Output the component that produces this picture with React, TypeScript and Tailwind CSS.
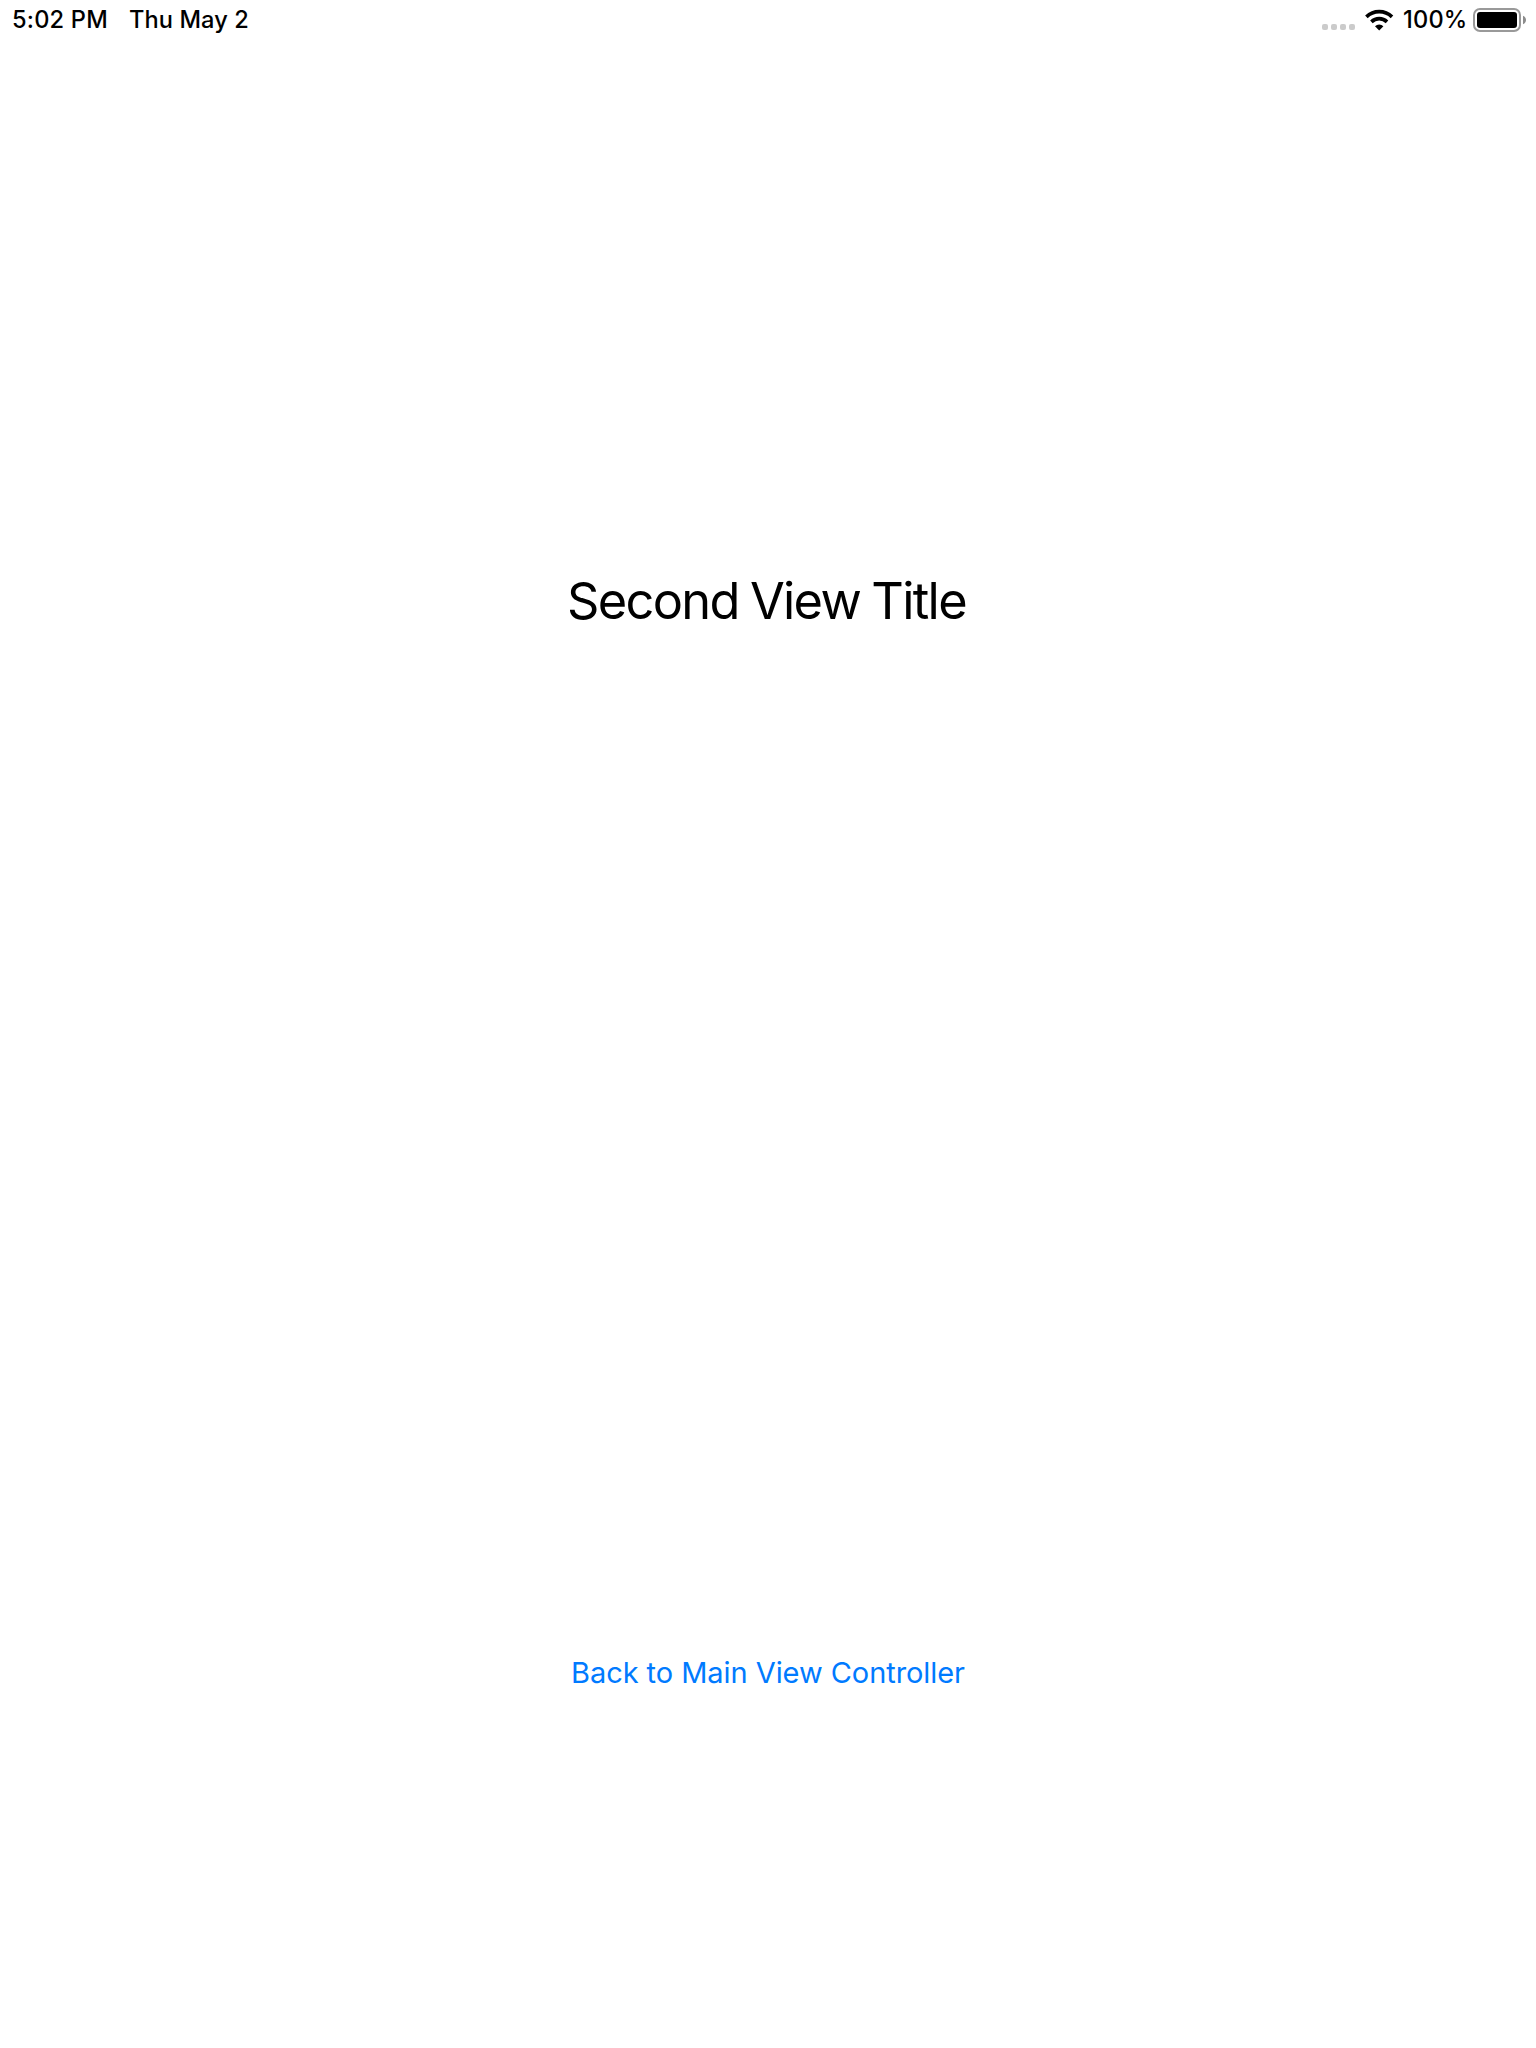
function CellularDots() {
  return (
    <svg width="34" height="40" viewBox="0 0 34 40" fill="#cbcbcb">
      <rect x="0" y="24" width="6" height="6" rx="2" />
      <rect x="9" y="24" width="6" height="6" rx="2" />
      <rect x="18" y="24" width="6" height="6" rx="2" />
      <rect x="27" y="24" width="6" height="6" rx="2" />
    </svg>
  );
}

function Wifi() {
  return (
    <svg width="30" height="40" viewBox="0 0 30 40" fill="none" stroke="#000">
      <path d="M1.4 16.8 A18.6 18.6 0 0 1 27 16.8" strokeWidth="3.7" />
      <path d="M6.4 21.8 A11.4 11.4 0 0 1 22 21.8" strokeWidth="3.7" />
      <path d="M14.2 30.4 L10 26.2 A6 6 0 0 1 18.4 26.2 Z" fill="#000" stroke="none" />
    </svg>
  );
}

function Battery() {
  return (
    <svg width="54" height="40" viewBox="0 0 54 40">
      <rect x="1" y="9" width="46" height="22" rx="6" fill="none" stroke="#999" strokeWidth="2" />
      <rect x="4" y="12" width="40" height="16" rx="3" fill="#000" />
      <path d="M50 15.8 C54 17.4 54 22.6 50 24.2 Z" fill="#8c8c8c" />
    </svg>
  );
}

export default function App() {
  return (
    <div className="flex h-[2048px] w-[1536px] flex-col bg-white font-['Inter',sans-serif] text-black">
      <header className="flex h-10 shrink-0 justify-between pr-[9px] pl-3 text-[23.6px] leading-10 font-medium whitespace-nowrap">
        <div className="flex">
          <span className="w-[117px] tracking-[0.2px]">5:02 PM</span>
          <span className="tracking-[0.1px]">Thu May 2</span>
        </div>
        <div className="flex">
          <CellularDots />
          <span className="w-[9px]" />
          <Wifi />
          <span className="ml-[8px] w-[70px] tracking-[0.2px]">100%</span>
          <Battery />
        </div>
      </header>
      <main className="flex flex-col items-center">
        <h1 className="mt-[528px] mr-[3px] text-[50.5px] leading-[65px] font-normal tracking-[-1.7px] [word-spacing:-1.2px] whitespace-nowrap">
          Second View Title
        </h1>
        <button className="mt-[1018px] text-[29px] leading-[44px] font-normal tracking-[-0.06px] whitespace-nowrap text-[#007aff]">
          Back to Main View Controller
        </button>
      </main>
    </div>
  );
}
